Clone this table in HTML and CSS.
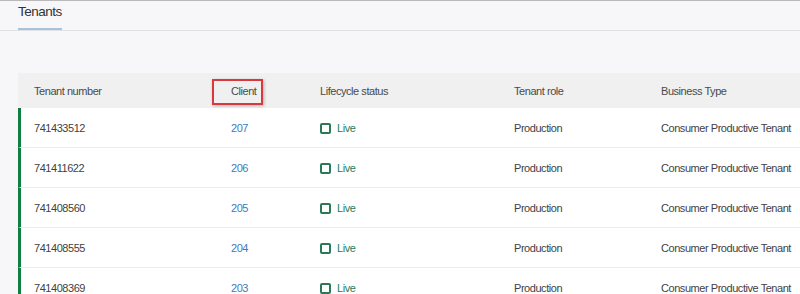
FILE: index.html
```html
<!DOCTYPE html>
<html lang="en">
<head>
    <meta charset="UTF-8">
    <title>Tenants</title>
    <link rel="stylesheet" href="styles.css">
</head>
<body>
    <div class="page-header">
        <div class="tab active">Tenants</div>
    </div>

    <div class="content">
        <div class="table">
            <div class="row head">
                <div class="cell">Tenant number</div>
                <div class="cell client">
                    Client
                    <span class="highlight"></span>
                </div>
                <div class="cell">Lifecycle status</div>
                <div class="cell">Tenant role</div>
                <div class="cell">Business Type</div>
            </div>

            <div class="row">
                <div class="cell">741433512</div>
                <div class="cell client"><a href="#">207</a></div>
                <div class="cell status"><span class="box"></span>Live</div>
                <div class="cell">Production</div>
                <div class="cell">Consumer Productive Tenant</div>
            </div>
            <div class="row">
                <div class="cell">741411622</div>
                <div class="cell client"><a href="#">206</a></div>
                <div class="cell status"><span class="box"></span>Live</div>
                <div class="cell">Production</div>
                <div class="cell">Consumer Productive Tenant</div>
            </div>
            <div class="row">
                <div class="cell">741408560</div>
                <div class="cell client"><a href="#">205</a></div>
                <div class="cell status"><span class="box"></span>Live</div>
                <div class="cell">Production</div>
                <div class="cell">Consumer Productive Tenant</div>
            </div>
            <div class="row">
                <div class="cell">741408555</div>
                <div class="cell client"><a href="#">204</a></div>
                <div class="cell status"><span class="box"></span>Live</div>
                <div class="cell">Production</div>
                <div class="cell">Consumer Productive Tenant</div>
            </div>
            <div class="row">
                <div class="cell">741408369</div>
                <div class="cell client"><a href="#">203</a></div>
                <div class="cell status"><span class="box"></span>Live</div>
                <div class="cell">Production</div>
                <div class="cell">Consumer Productive Tenant</div>
            </div>
        </div>
    </div>
</body>
</html>
```

FILE: styles.css
```css
body {
    margin: 0;
    font-family: "Liberation Sans", Arial, sans-serif;
    font-size: 11px;
    letter-spacing: -0.45px;
    color: #3f3f3f;
    background-color: #f7f6f8;
    border-top: 1px solid #b9b9bb;
    height: 293px;
    overflow: hidden;
}

.page-header {
    padding: 0 18px;
    border-bottom: 1px solid #e2e2e4;
    height: 29px;
}

.tab {
    display: inline-block;
    font-size: 13.5px;
    letter-spacing: -0.5px;
    color: #333333;
    padding-top: 3px;
    height: 24px;
}

.tab.active {
    border-bottom: 2px solid #a9c2dd;
}

.content {
    padding: 42px 0 0 18px;
}

.table {
    background-color: #ffffff;
}

.row {
    display: grid;
    grid-template-columns: 194px 92px 194px 147px 1fr;
    height: 40px;
    box-sizing: border-box;
    border-left: 3px solid #107e3e;
    border-bottom: 1px solid #ededed;
}

.row.head {
    height: 35px;
    background-color: #f0f0f0;
    border-left-color: #f0f0f0;
    border-bottom: none;
    color: #4a4a4a;
}

.cell {
    display: flex;
    align-items: center;
    padding-left: 13px;
    white-space: nowrap;
}

.client {
    position: relative;
    padding-left: 16px;
}

.client a {
    color: #3b7bc0;
    text-decoration: none;
}

.highlight {
    position: absolute;
    left: -3px;
    top: 6px;
    width: 47px;
    height: 22px;
    border: 2px solid #d8393f;
    box-shadow: 1px 1px 3px rgba(0, 0, 0, 0.25);
}

.status {
    color: #2b7a57;
}

.box {
    width: 7px;
    height: 7px;
    border: 2px solid #2b7a57;
    border-radius: 2px;
    margin-right: 6px;
    margin-top: 1px;
}
```
